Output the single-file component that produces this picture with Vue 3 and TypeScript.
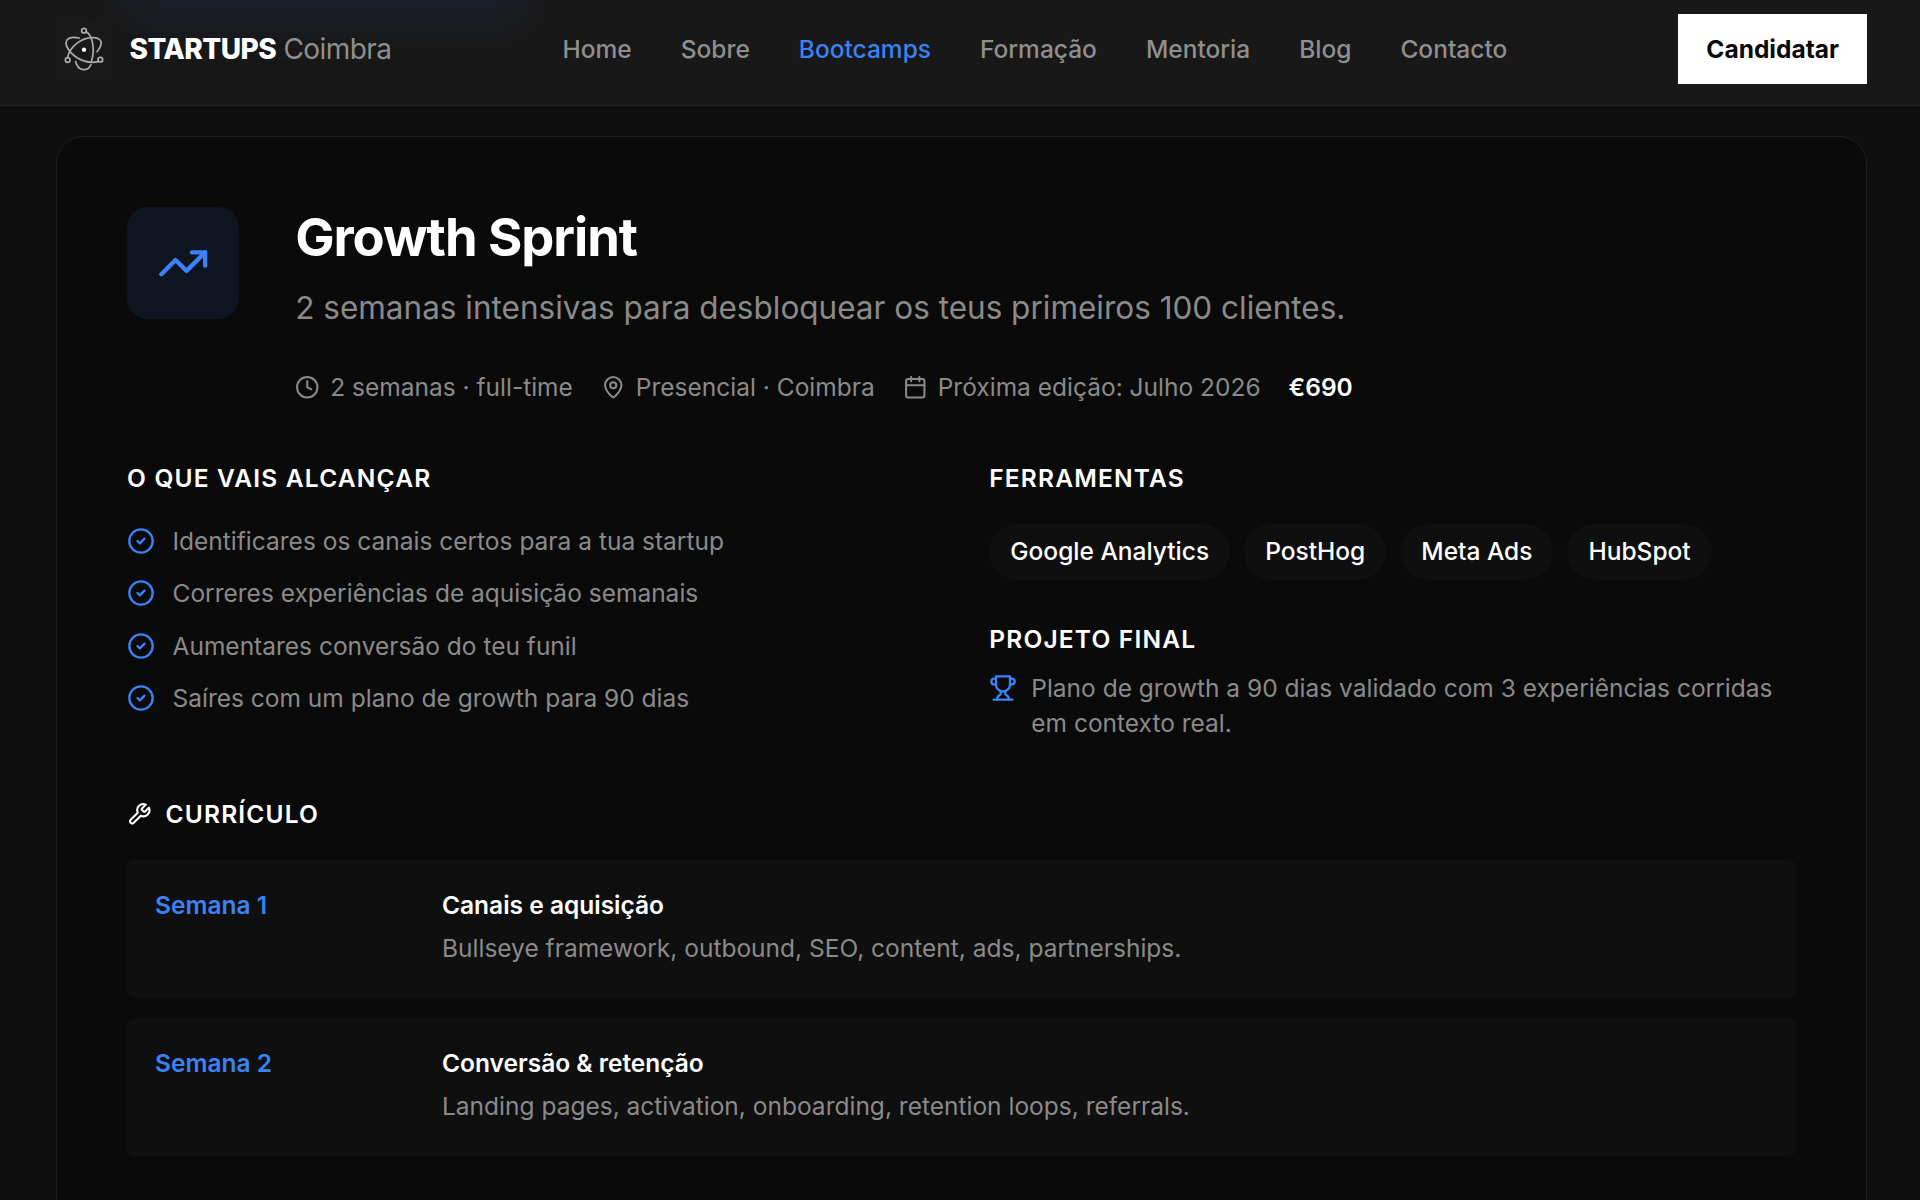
<script setup lang="ts">
interface NavItem {
  label: string
  active?: boolean
}

interface Week {
  label: string
  title: string
  text: string
}

const nav: NavItem[] = [
  { label: 'Home' },
  { label: 'Sobre' },
  { label: 'Bootcamps', active: true },
  { label: 'Formação' },
  { label: 'Mentoria' },
  { label: 'Blog' },
  { label: 'Contacto' },
]

const outcomes: string[] = [
  'Identificares os canais certos para a tua startup',
  'Correres experiências de aquisição semanais',
  'Aumentares conversão do teu funil',
  'Saíres com um plano de growth para 90 dias',
]

const tools: string[] = ['Google Analytics', 'PostHog', 'Meta Ads', 'HubSpot']

const weeks: Week[] = [
  { label: 'Semana 1', title: 'Canais e aquisição', text: 'Bullseye framework, outbound, SEO, content, ads, partnerships.' },
  { label: 'Semana 2', title: 'Conversão & retenção', text: 'Landing pages, activation, onboarding, retention loops, referrals.' },
]
</script>

<template>
  <div class="page">
    <header class="header">
      <div class="glow"></div>
      <div class="brand">
        <svg class="logo" viewBox="18 18 168 168">
          <g fill="none" stroke="#a9a9a9" stroke-width="5.2" stroke-linecap="round">
            <circle cx="102" cy="47" r="7" />
            <circle cx="53" cy="135" r="7" />
            <circle cx="151" cy="134" r="7" />
            <path d="M109 50C128 62 136 104 124 140" />
            <path d="M77 140C84 168 112 172 123 149" />
            <path d="M88 69C48 61 36 82 62 112C84 136 118 147 144 140" />
            <path d="M53 127C58 98 92 66 132 68C158 71 160 86 141 110" />
          </g>
          <circle cx="102" cy="104" r="6.5" fill="#fff" />
        </svg>
        <span class="name"><b>STARTUPS</b> Coimbra</span>
      </div>
      <nav class="nav">
        <a v-for="n in nav" :key="n.label" :class="{ active: n.active }">{{ n.label }}</a>
      </nav>
      <a class="apply">Candidatar</a>
    </header>

    <main class="main">
      <article class="card">
        <div class="intro">
          <div class="badge">
            <svg class="icon" viewBox="0 0 24 24"><path d="M16 7h6v6" /><path d="m22 7-8.5 8.5-5-5L2 17" /></svg>
          </div>
          <div class="intro-text">
            <h2>Growth Sprint</h2>
            <p class="lead">2 semanas intensivas para desbloquear os teus primeiros 100 clientes.</p>
            <div class="meta">
              <span>
                <svg class="icon" viewBox="0 0 24 24"><circle cx="12" cy="12" r="10" /><path d="M12 6v6l4 2" /></svg>
                2 semanas · full-time
              </span>
              <span>
                <svg class="icon" viewBox="0 0 24 24"><path d="M20 10c0 4.993-5.539 10.193-7.399 11.799a1 1 0 0 1-1.202 0C9.539 20.193 4 14.993 4 10a8 8 0 0 1 16 0" /><circle cx="12" cy="10" r="3" /></svg>
                Presencial · Coimbra
              </span>
              <span>
                <svg class="icon" viewBox="0 0 24 24"><path d="M8 2v4M16 2v4" /><rect x="3" y="4" width="18" height="18" rx="2" /><path d="M3 10h18" /></svg>
                Próxima edição: Julho 2026
              </span>
              <strong>€690</strong>
            </div>
          </div>
        </div>

        <div class="columns">
          <section>
            <h3>O QUE VAIS ALCANÇAR</h3>
            <ul class="outcomes">
              <li v-for="o in outcomes" :key="o">
                <svg class="icon" viewBox="0 0 24 24"><circle cx="12" cy="12" r="10" /><path d="m9 12 2 2 4-4" /></svg>
                <span>{{ o }}</span>
              </li>
            </ul>
          </section>
          <section>
            <h3>FERRAMENTAS</h3>
            <div class="pills">
              <span v-for="t in tools" :key="t">{{ t }}</span>
            </div>
            <h3 class="project-title">PROJETO FINAL</h3>
            <p class="project">
              <svg class="icon" viewBox="0 0 24 24">
                <path d="M6 9H4.5a2.5 2.5 0 0 1 0-5H6" />
                <path d="M18 9h1.5a2.5 2.5 0 0 0 0-5H18" />
                <path d="M4 22h16" />
                <path d="M10 14.66V17c0 .55-.47.98-.97 1.21C7.85 18.75 7 20.24 7 22" />
                <path d="M14 14.66V17c0 .55.47.98.97 1.21C16.15 18.75 17 20.24 17 22" />
                <path d="M18 2H6v7a6 6 0 0 0 12 0V2Z" />
              </svg>
              <span>Plano de growth a 90 dias validado com 3 experiências corridas em contexto real.</span>
            </p>
          </section>
        </div>

        <h3 class="curriculum">
          <svg class="icon" viewBox="0 0 24 24"><path d="M14.7 6.3a1 1 0 0 0 0 1.4l1.6 1.6a1 1 0 0 0 1.4 0l3.77-3.77a6 6 0 0 1-7.94 7.94l-6.91 6.91a2.12 2.12 0 0 1-3-3l6.91-6.91a6 6 0 0 1 7.94-7.94l-3.76 3.76z" /></svg>
          CURRÍCULO
        </h3>
        <div class="weeks">
          <div v-for="w in weeks" :key="w.label" class="week">
            <div class="week-label">{{ w.label }}</div>
            <div>
              <div class="week-title">{{ w.title }}</div>
              <p>{{ w.text }}</p>
            </div>
          </div>
        </div>
      </article>
    </main>
  </div>
</template>

<style>
body {
  background: #0f0f0f;
  overflow: hidden;
}
</style>

<style scoped>
* {
  box-sizing: border-box;
}

h2, h3, p, ul {
  margin: 0;
  padding: 0;
}

.page {
  height: 1200px;
  overflow: hidden;
  background: #0f0f0f;
  color: #fff;
  font-family: Inter, "Liberation Sans", sans-serif;
  font-size: 24.5px;
  line-height: 35px;
}

.icon {
  display: block;
  flex: none;
  fill: none;
  stroke: currentColor;
  stroke-width: 2;
  stroke-linecap: round;
  stroke-linejoin: round;
}

.header {
  position: relative;
  display: flex;
  align-items: center;
  justify-content: space-between;
  height: 106px;
  padding: 14px 53px 21px 56px;
  overflow: hidden;
  background: #181818;
  border-bottom: 1px solid #212121;
}

.glow {
  position: absolute;
  left: 126px;
  top: -80px;
  width: 400px;
  height: 104px;
  border-radius: 28px;
  background: #1a1f29;
  filter: blur(18px);
}

.brand {
  position: relative;
  display: flex;
  align-items: center;
  gap: 17.5px;
}

.logo {
  display: block;
  width: 56px;
  height: 56px;
  background: #191919;
}

.name {
  font-size: 28px;
  color: #8f8f8f;
  letter-spacing: -0.56px;
}

.name b {
  font-weight: 800;
  color: #fff;
}

.nav {
  position: relative;
  display: flex;
  gap: 49px;
  font-weight: 500;
  color: #8f8f8f;
}

.nav .active {
  color: #3b82f6;
}

.apply {
  padding: 17.5px 28px;
  background: #fff;
  color: #0a0a0a;
  font-weight: 700;
}

.main {
  padding: 30px 53.5px 0 56px;
}

.card {
  min-height: 1200px;
  padding: 70px;
  border: 1px solid #1f1f1f;
  border-radius: 28px;
  background: #0a0a0a;
}

.intro {
  display: flex;
  align-items: flex-start;
  gap: 56.2px;
}

.badge {
  display: flex;
  align-items: center;
  justify-content: center;
  flex: none;
  width: 112px;
  height: 112px;
  border-radius: 21px;
  background: #0f1520;
  color: #3b82f6;
}

.badge .icon {
  width: 52.5px;
  height: 52.5px;
}

h2 {
  font-size: 52.5px;
  line-height: 60px;
  font-weight: 700;
  letter-spacing: -1.05px;
}

.lead {
  margin-top: 16px;
  font-size: 31.5px;
  line-height: 49px;
  color: #8a8a8a;
}

.meta {
  display: flex;
  align-items: center;
  gap: 28px;
  margin-top: 38px;
  color: #8a8a8a;
}

.meta span {
  display: flex;
  align-items: center;
  gap: 10.5px;
}

.meta .icon {
  width: 24.5px;
  height: 24.5px;
}

.meta strong {
  font-weight: 600;
  color: #fff;
}

.columns {
  display: grid;
  grid-template-columns: 1fr 1fr;
  gap: 56px;
  margin-top: 56px;
}

h3 {
  font-size: 24.5px;
  line-height: 35px;
  font-weight: 600;
  letter-spacing: 1.19px;
}

.outcomes {
  display: flex;
  flex-direction: column;
  gap: 17.3px;
  margin-top: 28px;
  list-style: none;
  color: #8a8a8a;
}

.outcomes li {
  display: flex;
  gap: 17.5px;
}

.outcomes .icon,
.project .icon {
  width: 28px;
  height: 28px;
  margin-top: 3.2px;
  color: #3b82f6;
}

.pills {
  display: flex;
  gap: 14px;
  margin-top: 28px;
}

.pills span {
  padding: 10px 21px 11px;
  border-radius: 28px;
  background: #0f0f0f;
  font-weight: 500;
}

.project-title {
  margin-top: 42px;
}

.project {
  display: flex;
  gap: 14px;
  margin-top: 14px;
  color: #8a8a8a;
}

.curriculum {
  display: flex;
  align-items: center;
  gap: 14px;
  margin-top: 56px;
}

.curriculum .icon {
  width: 24.5px;
  height: 24.5px;
}

.weeks {
  display: flex;
  flex-direction: column;
  gap: 20px;
  margin-top: 28px;
}

.week {
  display: grid;
  grid-template-columns: 245px 1fr;
  gap: 42px;
  height: 138px;
  padding: 28px;
  border-radius: 7px;
  background: #0f0f0f;
}

.week-label {
  font-weight: 600;
  color: #3b82f6;
}

.week-title {
  font-weight: 600;
}

.week p {
  margin-top: 8px;
  color: #8a8a8a;
}
</style>
